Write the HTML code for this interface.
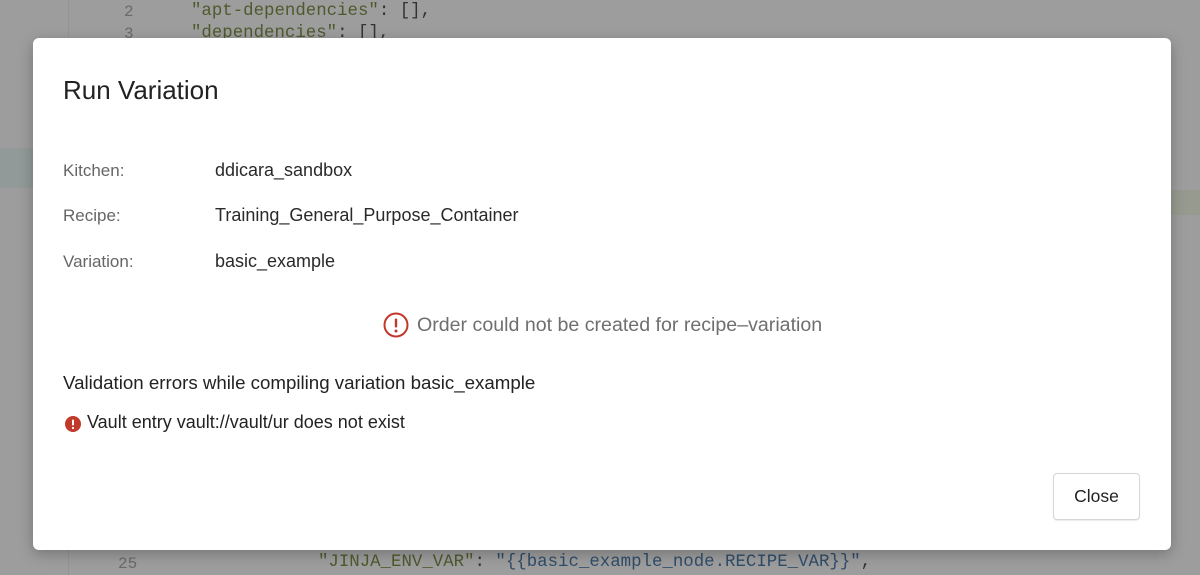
<!DOCTYPE html>
<html><head><meta charset="utf-8"><style>
body{margin:0;width:1200px;height:575px;overflow:hidden;background:#9d9d9d;font-family:"Liberation Sans",sans-serif;position:relative}
.code{position:absolute;font-family:"Liberation Mono",monospace;font-size:17.4px;color:#333}
.ln{position:absolute;font-family:"Liberation Mono",monospace;font-size:16px;color:#6a6a6a}
.g{color:#4e5a2e}.b{color:#2f4d6a}
.modal{position:absolute;left:33px;top:38px;width:1138px;height:512px;background:#fff;border-radius:6px;box-shadow:0 4px 14px rgba(0,0,0,.25)}
.t{position:absolute;white-space:nowrap}
.lbl{font-size:17px;color:#666}
.val{font-size:18px;color:#2a2a2a}
</style></head><body>
<div style="position:absolute;left:68px;top:0;width:1px;height:575px;background:#949494"></div>
<div style="position:absolute;left:0;top:148px;width:33px;height:40px;background:#919a98"></div>
<div style="position:absolute;left:1171px;top:190px;width:29px;height:25px;background:#979a8f"></div>
<div class="ln" style="left:124px;top:3px">2</div>
<div class="code" style="left:191px;top:2px"><span class="g">"apt-dependencies"</span>: [],</div>
<div class="ln" style="left:124px;top:25px">3</div>
<div class="code" style="left:191px;top:24px"><span class="g">"dependencies"</span>: [],</div>
<div class="ln" style="left:118px;top:555px">25</div>
<div class="code" style="left:318px;top:553px"><span class="g">"JINJA_ENV_VAR"</span>: <span class="b">"{{basic_example_node.RECIPE_VAR}}"</span>,</div>
<div class="modal">
<div class="t" style="left:30px;top:37px;font-size:26px;color:#222">Run Variation</div>
<div class="t lbl" style="left:30px;top:123px">Kitchen:</div>
<div class="t val" style="left:182px;top:122px">ddicara_sandbox</div>
<div class="t lbl" style="left:30px;top:168px">Recipe:</div>
<div class="t val" style="left:182px;top:167px">Training_General_Purpose_Container</div>
<div class="t lbl" style="left:30px;top:214px">Variation:</div>
<div class="t val" style="left:182px;top:213px">basic_example</div>
<svg style="position:absolute;left:350px;top:274px" width="26" height="26" viewBox="0 0 26 26"><circle cx="13" cy="13" r="11.5" fill="none" stroke="#c0392b" stroke-width="2"/><rect x="11.8" y="6.5" width="2.4" height="9" rx="1" fill="#c0392b"/><circle cx="13" cy="19" r="1.5" fill="#c0392b"/></svg>
<div class="t" style="left:384px;top:276px;font-size:19.6px;color:#6f6f6f">Order could not be created for recipe–variation</div>
<div class="t" style="left:30px;top:334px;font-size:18.7px;color:#222">Validation errors while compiling variation basic_example</div>
<svg style="position:absolute;left:32px;top:378px" width="16" height="16" viewBox="0 0 16 16"><circle cx="8" cy="8" r="8" fill="#c0392b"/><rect x="7" y="3.5" width="2" height="6" rx="1" fill="#fff"/><circle cx="8" cy="12" r="1.1" fill="#fff"/></svg>
<div class="t" style="left:54px;top:374px;font-size:18px;color:#222">Vault entry vault://vault/ur does not exist</div>
<div style="position:absolute;left:1020px;top:435px;width:85px;height:45px;border:1px solid #d6d6d6;border-radius:4px;box-shadow:0 1px 1px rgba(0,0,0,.08);font-size:17.5px;color:#222;display:flex;align-items:center;justify-content:center">Close</div>
</div>
</body></html>
